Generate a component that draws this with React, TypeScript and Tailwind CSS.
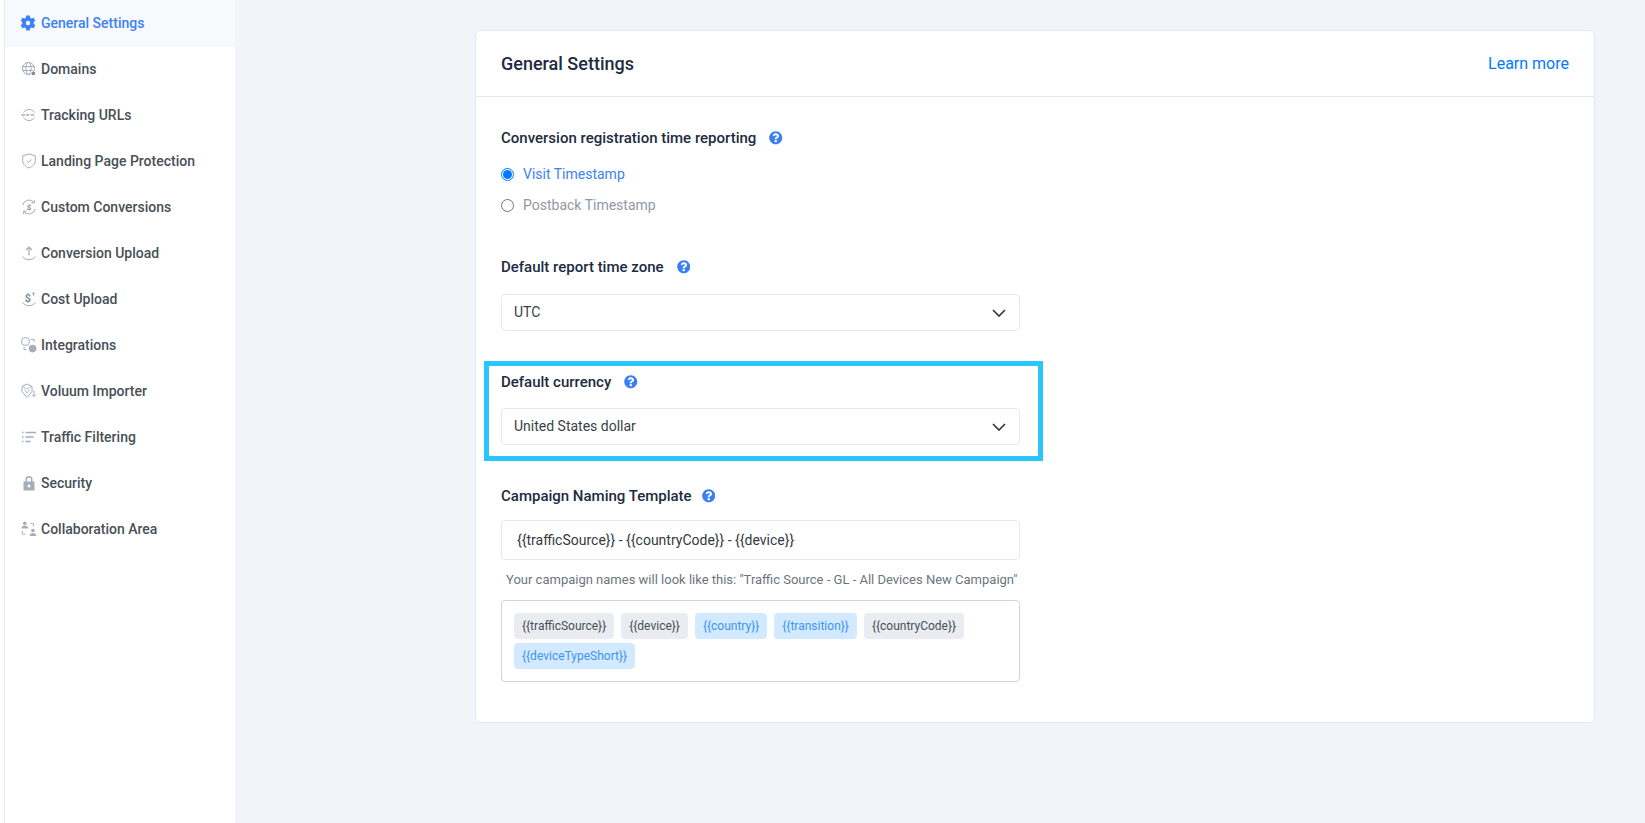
import type { ReactNode } from 'react'
import { FaQuestionCircle } from 'react-icons/fa'

const iconClass = 'h-4 w-4 shrink-0 text-[#a3aeba]'

function Svg({ children }: { children: ReactNode }) {
  return (
    <svg viewBox="0 0 16 16" fill="none" stroke="currentColor" strokeWidth="1" className={iconClass}>
      {children}
    </svg>
  )
}

const icons: Record<string, ReactNode> = {
  domains: (
    <Svg>
      <circle cx="7.5" cy="7.5" r="6" />
      <ellipse cx="7.5" cy="7.5" rx="2.6" ry="6" />
      <path d="M1.500 5.500h12M1.500 9.500h12" />
      <circle cx="12.300" cy="12.300" r="2.400" fill="#7f8c9b" stroke="#fff" />
    </Svg>
  ),
  tracking: (
    <Svg>
      <path d="M2.500 5.500A6.500 6.500 0 0 1 13.500 5.500M2.500 10.500A6.500 6.500 0 0 0 13.500 10.500" />
      <path d="M0.500 7l.8 2 .8-2 .8 2 .8-2M5.100 7l.8 2 .8-2 .8 2 .8-2M9.700 7l.8 2 .8-2 .8 2 .8-2" strokeWidth="0.800" />
    </Svg>
  ),
  shield: (
    <Svg>
      <path d="M8 1l6.300 1.800v5c0 3.200-2.600 5.700-6.300 7.200-3.700-1.500-6.300-4-6.300-7.200v-5z" />
      <path d="M5.700 8l1.700 1.600 3-3.200" />
    </Svg>
  ),
  conversions: (
    <Svg>
      <path d="M1.700 6A6.500 6.500 0 0 1 13 3.400M14.300 10A6.500 6.500 0 0 1 3 12.600" />
      <path d="M10.300 4h3V1M5.700 12h-3v3" />
      <text x="8" y="10.800" textAnchor="middle" fontSize="8" fontWeight="700" fill="#7f8c9b" stroke="none" fontFamily="Roboto, sans-serif">$</text>
    </Svg>
  ),
  upload: (
    <Svg>
      <path d="M8 10.500V2M5 5l3-3 3 3" strokeWidth="1.200" />
      <path d="M1.500 11.500c1.500 2 3.800 3.200 6.500 3.200s5-1.200 6.500-3.200" />
    </Svg>
  ),
  cost: (
    <Svg>
      <text x="7" y="10.800" textAnchor="middle" fontSize="11" fontWeight="700" fill="#7f8c9b" stroke="none" fontFamily="Roboto, sans-serif">$</text>
      <path d="M12.500 5V1.500M11.200 2.800l1.300-1.300 1.300 1.300" />
      <path d="M1.500 11.500c1.500 2 3.800 3.200 6.500 3.200s5-1.200 6.500-3.200" />
    </Svg>
  ),
  integrations: (
    <Svg>
      <rect x="0.800" y="0.800" width="7.400" height="7.400" rx="2.200" />
      <circle cx="11.600" cy="11.600" r="3.800" fill="currentColor" stroke="none" />
      <path d="M10 2.500h3v2.500M3 10v2.500h2.500" />
    </Svg>
  ),
  importer: (
    <Svg>
      <path d="M6 1l5 2.400v5.200L6 14.500 1 8.600V3.400z" />
      <path d="M3.500 6.500L6 10l2.500-3.500M1 3.400L6 6l5-2.600" strokeWidth="0.800" />
      <path d="M13 7.500v6M11.200 11.800l1.800 1.800 1.800-1.800" />
    </Svg>
  ),
  filter: (
    <Svg>
      <path d="M1 3.500h1.500M1 8h1.500M1 12.500h1.500" strokeWidth="1.300" />
      <path d="M4.500 3.500H15M4.500 8h8M4.500 12.500h5" strokeWidth="1.300" />
    </Svg>
  ),
  security: (
    <svg viewBox="0 0 16 16" className={iconClass}>
      <path
        fill="currentColor"
        fillRule="evenodd"
        d="M4.500 6.500V4.500a3.500 3.500 0 0 1 7 0v2h1.500a.5.500 0 0 1 .5.500v8a.5.500 0 0 1-.5.500H3a.5.500 0 0 1-.5-.500V7a.5.500 0 0 1 .5-.500zM6 6.500h4v-2a2 2 0 0 0-4 0zM8 9.500a1.500 1.500 0 1 0 0 3 1.500 1.500 0 0 0 0-3z"
      />
    </svg>
  ),
  collaboration: (
    <Svg>
      <circle cx="3.800" cy="2.300" r="1.800" fill="currentColor" stroke="none" />
      <path d="M0.500 7.500c0-2 1.400-3 3.300-3s3.300 1 3.300 3z" fill="currentColor" stroke="none" />
      <circle cx="12" cy="9.500" r="1.800" fill="currentColor" stroke="none" />
      <path d="M8.700 15c0-2 1.400-3 3.300-3s3.300 1 3.300 3z" fill="currentColor" stroke="none" />
      <path d="M9.500 2.500h3v3M1.500 10v3h3" strokeWidth="0.900" />
    </Svg>
  ),
}

const navItems = [
  { label: 'Domains', icon: 'domains' },
  { label: 'Tracking URLs', icon: 'tracking' },
  { label: 'Landing Page Protection', icon: 'shield' },
  { label: 'Custom Conversions', icon: 'conversions' },
  { label: 'Conversion Upload', icon: 'upload' },
  { label: 'Cost Upload', icon: 'cost' },
  { label: 'Integrations', icon: 'integrations' },
  { label: 'Voluum Importer', icon: 'importer' },
  { label: 'Traffic Filtering', icon: 'filter' },
  { label: 'Security', icon: 'security' },
  { label: 'Collaboration Area', icon: 'collaboration' },
]

const tokens = [
  { label: '{{trafficSource}}', active: false },
  { label: '{{device}}', active: false },
  { label: '{{country}}', active: true },
  { label: '{{transition}}', active: true },
  { label: '{{countryCode}}', active: false },
  { label: '{{deviceTypeShort}}', active: true },
]

function GearIcon() {
  return (
    <svg viewBox="0 0 16 16" className="h-4 w-4 shrink-0 text-[#3b82f6]">
      <path
        fill="currentColor"
        fillRule="evenodd"
        d="M6.300.6h3.400l.5 2.100 1.300.75 2.050-.6 1.700 2.950-1.550 1.450v1.500l1.550 1.450-1.700 2.950-2.050-.6-1.300.75-.5 2.100H6.300l-.5-2.100-1.300-.75-2.050.6-1.700-2.950 1.550-1.450v-1.500L.75 5.800l1.700-2.950 2.050.6 1.300-.75zM8 5.800a2.200 2.200 0 1 0 0 4.400 2.200 2.200 0 0 0 0-4.400z"
      />
    </svg>
  )
}

function FieldLabel({ children, tight }: { children: ReactNode; tight?: boolean }) {
  return (
    <div className={tight ? 'flex h-5 items-center gap-[10px] text-[15px] font-medium text-[#212b3f]' : 'flex h-5 items-center gap-[13px] text-[15px] font-medium text-[#212b3f]'}>
      <span>{children}</span>
      <FaQuestionCircle className="h-[13.5px] w-[13.5px] text-[#3b7ff2]" />
    </div>
  )
}

function Select({ value }: { value: string }) {
  return (
    <div className="flex h-[37px] w-[519px] items-center justify-between rounded border border-[#e6e8ec] bg-white px-3 text-[14px] text-[#3a3f47]">
      <span>{value}</span>
      <svg viewBox="0 0 14 8" fill="none" stroke="#343a40" strokeWidth="1.700" className="mr-px h-2 w-[14px]">
        <path d="M1 1l6 6 6-6" />
      </svg>
    </div>
  )
}

function Radio({ checked, label }: { checked: boolean; label: string }) {
  return (
    <div className="flex h-5 items-center gap-[9px]">
      {checked ? (
        <span className="flex h-[13px] w-[13px] items-center justify-center rounded-full border border-[#007bff]">
          <span className="h-[9px] w-[9px] rounded-full bg-[#007bff]" />
        </span>
      ) : (
        <span className="h-[13px] w-[13px] rounded-full border border-[#6c757d]" />
      )}
      <span className={checked ? 'text-[14px] text-[#3d82f6]' : 'text-[14px] text-[#8f99a3]'}>{label}</span>
    </div>
  )
}

export default function App() {
  return (
    <div className="flex min-h-screen bg-[#f3f4f9] font-['Roboto',sans-serif]">
      {/* Sidebar */}
      <aside className="w-[235px] shrink-0 bg-white pl-1">
        <div className="min-h-screen border-l border-[#e8eaf2]">
          <div className="-mb-px flex h-[47px] items-center gap-[4px] bg-[#f8f9fd] pb-px pl-[15px] text-[14px] font-medium text-[#3b82f6]">
            <GearIcon />
            <span className="ml-px">General Settings</span>
          </div>
          <nav className="flex flex-col">
            {navItems.map((item) => (
              <div key={item.label} className="flex h-[46px] items-center gap-1 pl-4 text-[14px] font-medium text-[#495057]">
                {icons[item.icon]}
                <span>{item.label}</span>
              </div>
            ))}
          </nav>
        </div>
      </aside>

      {/* Settings card */}
      <main className="flex-1 pl-[240px] pr-[50px] pt-[30px]">
        <section className="h-[693px] w-[1120px] rounded-md border border-[#e6e8ec] bg-white">
          <header className="flex h-[66px] items-center justify-between border-b border-[#e6e8ec] px-[25px]">
            <h1 className="text-[18px] font-medium text-[#212b3f]">General Settings</h1>
            <a className="text-[16px] text-[#007bff]">Learn more</a>
          </header>

          <div className="pl-[25px] pt-[31px]">
            <FieldLabel>Conversion registration time reporting</FieldLabel>
            <div className="mt-[16px] flex flex-col gap-[11px]">
              <Radio checked label="Visit Timestamp" />
              <Radio checked={false} label="Postback Timestamp" />
            </div>

            <div className="mt-[42px]">
              <FieldLabel>Default report time zone</FieldLabel>
              <div className="mt-[17px]">
                <Select value="UTC" />
              </div>
            </div>

            {/* highlighted field */}
            <div className="-ml-[17px] mt-[30px] h-[100px] w-[559px] border-[5px] border-[#29c6fb] pl-3 pt-[6px]">
              <FieldLabel>Default currency</FieldLabel>
              <div className="mt-[16px]">
                <Select value="United States dollar" />
              </div>
            </div>

            <div className="mt-[25px]">
              <FieldLabel tight>Campaign Naming Template</FieldLabel>
              <div className="mt-[14px] flex h-10 w-[519px] items-center rounded border border-[#e6e8ec] pl-[15px] text-[14px] text-[#343a40]">
                {'{{trafficSource}} - {{countryCode}} - {{device}}'}
              </div>
              <p className="mt-[10px] pl-[5px] text-[13px] leading-[20px] text-[#6c757d]">
                Your campaign names will look like this: "Traffic Source - GL - All Devices New Campaign"
              </p>
              <div className="mt-[10px] flex h-[82px] w-[519px] flex-wrap content-start gap-x-[7px] gap-y-1 rounded border border-[#ced4da] p-3">
                {tokens.map((token) => (
                  <span
                    key={token.label}
                    className={
                      token.active
                        ? 'flex h-[26px] items-center rounded bg-[#d3e9ff] px-2 text-[12px] text-[#3b95f5]'
                        : 'flex h-[26px] items-center rounded bg-[#e9ecf0] px-2 text-[12px] text-[#495057]'
                    }
                  >
                    {token.label}
                  </span>
                ))}
              </div>
            </div>
          </div>
        </section>
      </main>
    </div>
  )
}
